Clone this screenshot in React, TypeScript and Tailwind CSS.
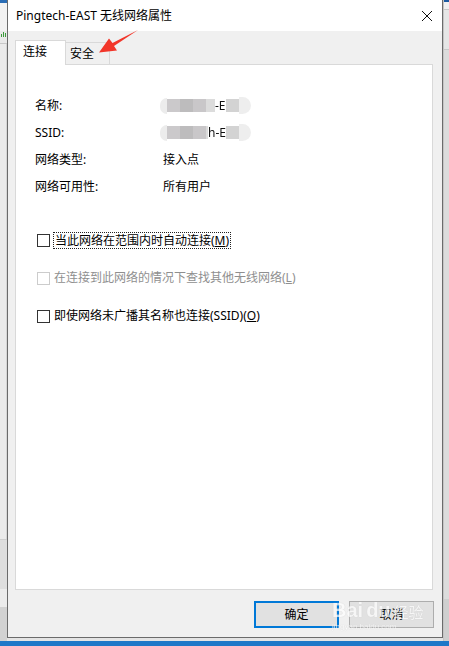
import React from "react";

const F = "font-['Noto_Sans','Noto_Sans_CJK_SC',sans-serif]";

function Box({ disabled }: { disabled?: boolean }) {
  return (
    <div
      className={`w-[13px] h-[13px] shrink-0 border bg-white ${
        disabled ? "border-[#cccccc]" : "border-[#333333]"
      }`}
    />
  );
}

function InfoRow({ label, children }: { label: string; children: React.ReactNode }) {
  return (
    <div className="flex items-center h-[27px]">
      <div className="w-[128px] shrink-0">{label}</div>
      <div className="flex items-center">{children}</div>
    </div>
  );
}

function Blur({ text, pre }: { text: string; pre: number }) {
  return (
    <div className="flex items-center h-[20px] -ml-[3px] blur-[0.6px]">
      <div className="w-[7px] h-[16px] rounded-l-full bg-[#ececec]" />
      <div className="w-[13px] h-[13px] bg-[#cbc9cb]" />
      <div className="w-[13px] h-[13px] bg-[#bdbcbd]" />
      <div className="w-[13px] h-[13px] bg-[#c9c7c9]" />
      <div style={{ width: pre }} className="h-[13px] bg-[#dcdcdc]" />
      <span className="text-[#111]">{text}</span>
      <div className="w-[13px] h-[13px] bg-[#d3d3d3]" />
      <div className="w-[12px] h-[17px] rounded-r-full bg-[#eeeeee]" />
    </div>
  );
}

export default function App() {
  return (
    <div className={`w-[449px] h-[646px] overflow-hidden relative bg-[#dcdcdc] ${F} text-[12px] text-[#000]`}>
      <div className="flex h-[641px]">
        {/* left background strip */}
        <div className="w-[7px] flex flex-col bg-[#e9e9e9]">
          <div className="h-[3px] bg-[#2a6db5]" />
          <div className="h-[28px] bg-[#f2f2f2]" />
          <div className="h-[6px] flex items-end gap-[1px] pl-[1px]">
            <div className="w-[1px] h-[3px] bg-[#3a9a3a]" />
            <div className="w-[1px] h-[5px] bg-[#3a9a3a]" />
            <div className="w-[1px] h-[4px] bg-[#3a9a3a]" />
          </div>
          <div className="h-[7px] border-b border-[#c8c8c8]" />
          <div className="flex-1 bg-[#ebebeb] border-r border-[#d6d6d6]" />
          <div className="h-[50px] bg-[#dedede] border-t border-[#cfcfcf]" />
          <div className="h-[18px] bg-[#ececec]" />
          <div className="h-[34px] bg-[#d2d2d2]" />
        </div>

        {/* dialog column */}
        <div className="w-[436px] flex flex-col">
          <div className="h-[638px] flex flex-col border-x border-b border-[#6b6b6b] bg-[#f0f0f0]">
            {/* title bar */}
            <div className="h-[31px] bg-white flex items-center justify-between pl-[8px] pr-[9px]">
              <span className="text-[12px] text-[#000] leading-none">Pingtech-EAST 无线网络属性</span>
              <svg width="12" height="12" viewBox="0 0 12 12">
                <path d="M1 1 L11 11 M11 1 L1 11" stroke="#111" strokeWidth="1" />
              </svg>
            </div>
            {/* body */}
            <div className="flex-1 flex flex-col pl-[7px] pr-[9px] pt-[9px]">
              {/* tabs */}
              <div className="flex items-end h-[24px]">
                <div className="relative z-10 w-[51px] h-[25px] -mb-[1px] bg-white border-t border-x border-[#d9d9d9] pl-[7px] pt-[4px] leading-none">
                  <span className="relative top-[1px]">连接</span>
                </div>
                <div className="w-[44px] h-[22px] border-t border-r border-[#d9d9d9] pl-[4px] pt-[5px] leading-none">
                  安全
                </div>
              </div>
              {/* panel */}
              <div className="h-[526px] w-[418px] bg-white border border-[#d9d9d9] pl-[19px] pt-[27px] text-[#000]">
                <InfoRow label="名称:">
                  <Blur text="-E" pre={9} />
                </InfoRow>
                <InfoRow label="SSID:">
                  <Blur text="h-E" pre={2} />
                </InfoRow>
                <InfoRow label="网络类型:">
                  <span>接入点</span>
                </InfoRow>
                <InfoRow label="网络可用性:">
                  <span>所有用户</span>
                </InfoRow>

                <div className="flex flex-col gap-[16px] mt-[29px] pl-[2px]">
                  <div className="flex items-center h-[22px]">
                    <Box />
                    <span className="ml-[3px] border border-dotted border-[#222] px-[1px] leading-[15px]">
                      当此网络在范围内时自动连接(<span className="underline">M</span>)
                    </span>
                  </div>
                  <div className="flex items-center h-[22px] text-[#8f8f8f]">
                    <Box disabled />
                    <span className="ml-[4px]">
                      在连接到此网络的情况下查找其他无线网络(<span className="underline">L</span>)
                    </span>
                  </div>
                  <div className="flex items-center h-[22px]">
                    <Box />
                    <span className="ml-[4px]">
                      即使网络未广播其名称也连接(SSID)(<span className="underline">O</span>)
                    </span>
                  </div>
                </div>
              </div>
              {/* buttons */}
              <div className="flex justify-end gap-[10px] mt-[11px] pr-[0px] -mr-[1px]">
                <button className="w-[85px] h-[27px] bg-[#e1e1e1] border-2 border-[#0078d7] text-[12px]">确定</button>
                <button className="w-[85px] h-[27px] bg-[#e1e1e1] border border-[#adadad] text-[12px]">取消</button>
              </div>
            </div>
          </div>
          <div className="flex-1 bg-[#e4e4e4]" />
        </div>

        {/* right background strip */}
        <div className="w-[6px] flex flex-col bg-[#dedede] border-l border-[#c4c4c4]">
          <div className="h-[2px] bg-[#1c5aa0]" />
          <div className="h-[8px] bg-[#f0f0f0] border-b border-[#c9c9c9]" />
          <div className="h-[40px] bg-[#e6e6e6] border-b border-[#c9c9c9]" />
          <div className="flex-1 bg-[#dcdcdc]" />
          <div className="h-[42px] bg-[#cfcfcf]" />
        </div>
      </div>
      <div className="h-[5px] bg-[#1e78c8]" />

      {/* red arrow annotation */}
      <svg className="absolute left-0 top-0 pointer-events-none" width="449" height="80">
        <polygon
          points="138,30 114,46 117,50.5 99,52.5 109,38.5 112.5,43"
          fill="#f2362a"
        />
      </svg>

      {/* watermark */}
      <div className="absolute left-[332px] top-[600px] pointer-events-none text-white opacity-70 font-['Liberation_Sans',sans-serif]">
        <div className="flex items-end gap-[3px] leading-none [text-shadow:0_0_1px_#bbb]">
          <span className="text-[20px] font-bold">Bai</span>
          <span className="text-[20px] font-bold">du</span>
          <span className={`text-[15px] ${F}`}>经验</span>
        </div>
        <div className="text-[8px] leading-none mt-[3px] [text-shadow:0_0_1px_#bbb]">jingyan.baidu.com</div>
      </div>
    </div>
  );
}
